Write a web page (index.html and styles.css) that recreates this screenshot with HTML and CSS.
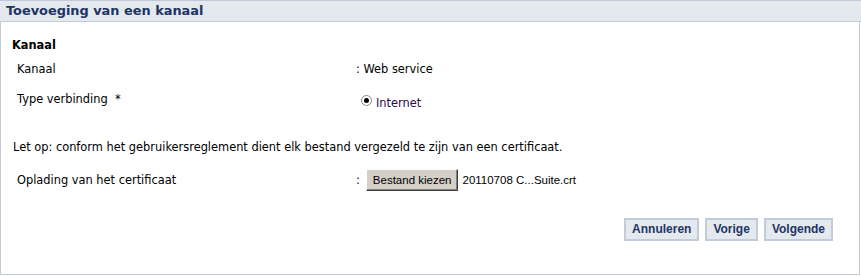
FILE: index.html
```html
<!DOCTYPE html>
<html lang="nl">
<head>
    <meta charset="UTF-8">
    <title>Toevoeging van een kanaal</title>
    <link rel="stylesheet" href="styles.css">
</head>
<body>
    <div class="panel">
        <div class="panel-head">
            <h1>Toevoeging van een kanaal</h1>
        </div>
        <div class="panel-body">
            <h2>Kanaal</h2>

            <div class="row">
                <div class="label">Kanaal</div>
                <div class="value">: Web service</div>
            </div>

            <div class="row row-radio">
                <div class="label">Type verbinding &nbsp;*</div>
                <div class="value">
                    <span class="radio"><span class="dot"></span></span>
                    <span class="radio-text">Internet</span>
                </div>
            </div>

            <p class="note">Let op: conform het gebruikersreglement dient elk bestand vergezeld te zijn van een certificaat.</p>

            <div class="row row-file">
                <div class="label">Oplading van het certificaat</div>
                <div class="value">
                    <span class="colon">:</span>
                    <span class="file-btn">Bestand kiezen</span>
                    <span class="file-name">20110708 C...Suite.crt</span>
                </div>
            </div>

            <div class="actions">
                <button class="button">Annuleren</button>
                <button class="button">Vorige</button>
                <button class="button">Volgende</button>
            </div>
        </div>
    </div>
</body>
</html>
```

FILE: styles.css
```css
body {
    margin: 0;
    font-family: 'DejaVu Sans', Verdana, sans-serif;
    font-size: 11.4px;
    color: #000;
    background: #fff;
}

.panel {
    width: 861px;
    height: 276px;
}

.panel-head {
    border-top: 1px solid #bccada;
    border-bottom: 1px solid #c2ccd6;
    background-color: #e4e9ee;
    height: 20px;
}

h1 {
    margin: 0;
    padding-left: 6px;
    font-size: 12.9px;
    line-height: 20px;
    font-weight: bold;
    color: #1d3564;
}

.panel-body {
    width: 858px;
    height: 252px;
    border-left: 1px solid #bccada;
    border-right: 1px solid #bccada;
    border-bottom: 1px solid #c2ccd6;
}

h2 {
    margin: 0;
    padding: 16px 0 0 11px;
    font-size: 11.4px;
    line-height: 14px;
    font-weight: bold;
}

.row {
    display: flex;
    padding-left: 16px;
    margin-top: 10px;
    line-height: 14px;
}

.label {
    width: 339px;
}

.row-radio {
    margin-top: 16px;
}

.row-radio .value {
    display: flex;
    align-items: center;
    padding-left: 5px;
    padding-top: 4px;
}

.radio {
    width: 11px;
    height: 11px;
    border: 1px solid #8a8a8a;
    border-radius: 50%;
    box-sizing: border-box;
    display: flex;
    justify-content: center;
    align-items: center;
    margin-right: 4px;
    margin-top: -5px;
}

.dot {
    width: 5px;
    height: 5px;
    border-radius: 50%;
    background: #000;
}

.radio-text {
    color: #2a0a4a;
}

.note {
    margin: 30px 0 0 12px;
    line-height: 14px;
}

.row-file {
    margin-top: 19px;
}

.row-file .value {
    display: flex;
    align-items: center;
    margin-top: -4px;
}

.colon {
    margin-right: 6px;
}

.file-btn {
    font-family: 'Liberation Sans', Arial, sans-serif;
    font-size: 11.5px;
    background: #d4d0c8;
    border: 1px solid;
    border-color: #fff #404040 #404040 #fff;
    box-shadow: inset -1px -1px 0 #808080;
    padding: 3px 6px;
    line-height: 14px;
}

.file-name {
    font-family: 'Liberation Sans', Arial, sans-serif;
    font-size: 11.5px;
    margin-left: 4px;
}

.actions {
    display: flex;
    justify-content: flex-end;
    gap: 6px;
    margin-top: 27px;
    padding-right: 26px;
}

.button {
    font-family: 'Liberation Sans', Arial, sans-serif;
    font-size: 12px;
    font-weight: bold;
    color: #1d3564;
    background-color: #e4e9ee;
    border: 2px solid #c2ccd8;
    padding: 2px 6px;
    height: 23px;
    line-height: 15px;
    margin: 0;
}
```
